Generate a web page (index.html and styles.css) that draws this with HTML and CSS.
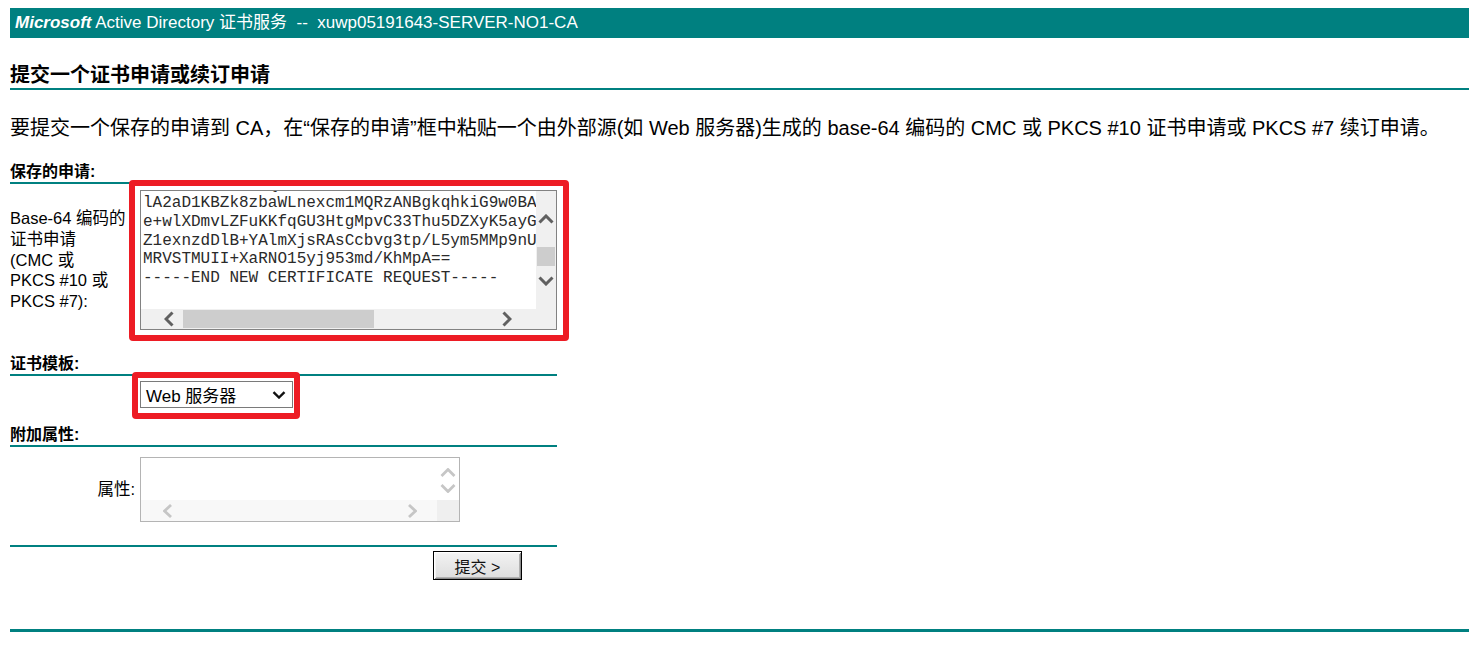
FILE: index.html
```html
<!DOCTYPE html>
<html lang="zh-CN">
<head>
<meta charset="utf-8">
<title>Microsoft Active Directory 证书服务</title>
<link rel="stylesheet" href="styles.css">
</head>
<body>
<div class="header"><span class="ms">Microsoft</span> Active Directory 证书服务&nbsp;&nbsp;--&nbsp;&nbsp;xuwp05191643-SERVER-NO1-CA</div>

<h1 class="title">提交一个证书申请或续订申请</h1>

<p class="intro">要提交一个保存的申请到 CA，在“保存的申请”框中粘贴一个由外部源(如 Web 服务器)生成的 base-64 编码的 CMC 或 PKCS #10 证书申请或 PKCS #7 续订申请。</p>

<div class="form">
  <div class="section">保存的申请:</div>
  <div class="row row-req">
    <div class="label">Base-64 编码的<br>证书申请<br>(CMC 或<br>PKCS #10 或<br>PKCS #7):</div>
    <div class="mark mark-req">
      <div class="ta ta-req">
        <div class="ta-content"><pre class="ta-text">MIICZTCCAU0CAQAwIDEeMBwGA1UEAxMVd3d3LmV4Ag1wbGUuY29tMIIBIjANBgkqh
lA2aD1KBZk8zbaWLnexcm1MQRzANBgkqhkiG9w0BAQsFAAOCAQEAq3Zt8LmWuR2
e+wlXDmvLZFuKKfqGU3HtgMpvC33Thu5DZXyK5ayGw8P0nQ+rT4oVb7sJcE1hLxI
Z1exnzdDlB+YAlmXjsRAsCcbvg3tp/L5ym5MMp9nUe2kWq6FdRa0tHi8oN3jZvbY
MRVSTMUII+XaRNO15yj953md/KhMpA==
-----END NEW CERTIFICATE REQUEST-----</pre></div>
        <div class="vbar">
          <svg class="arr-v up" width="16" height="10" viewBox="0 0 16 10"><polyline points="1.5,8.5 8,2 14.5,8.5"/></svg>
          <div class="vthumb"></div>
          <svg class="arr-v down" width="16" height="10" viewBox="0 0 16 10"><polyline points="1.5,1.5 8,8 14.5,1.5"/></svg>
        </div>
        <div class="hbar">
          <svg class="arr-h left" width="10" height="16" viewBox="0 0 10 16"><polyline points="8.5,1.5 2,8 8.5,14.5"/></svg>
          <div class="hthumb"></div>
          <svg class="arr-h right" width="10" height="16" viewBox="0 0 10 16"><polyline points="1.5,1.5 8,8 1.5,14.5"/></svg>
        </div>
        <div class="corner"></div>
      </div>
    </div>
  </div>

  <div class="section sec-tpl">证书模板:</div>
  <div class="row row-tpl">
    <div class="label"></div>
    <div class="mark mark-sel">
      <div class="select">
        <span>Web 服务器</span>
        <svg width="14" height="8" viewBox="0 0 14 8"><polyline points="1.5,1.2 7,6.5 12.5,1.2"/></svg>
      </div>
    </div>
  </div>

  <div class="section sec-attr">附加属性:</div>
  <div class="row row-attr">
    <div class="label label-right">属性:</div>
    <div class="ta ta-attr">
      <div class="ta-content"></div>
      <div class="vbar">
        <svg class="arr-v up" width="16" height="9" viewBox="0 0 16 9"><polyline points="1.5,8 8,1.5 14.5,8"/></svg>
        <svg class="arr-v down" width="16" height="9" viewBox="0 0 16 9"><polyline points="1.5,1 8,7.5 14.5,1"/></svg>
      </div>
      <div class="hbar">
        <svg class="arr-h left" width="9" height="14" viewBox="0 0 9 14"><polyline points="8,1 1.5,7 8,13"/></svg>
        <svg class="arr-h right" width="9" height="14" viewBox="0 0 9 14"><polyline points="1,1 7.5,7 1,13"/></svg>
      </div>
      <div class="corner"></div>
    </div>
  </div>

  <div class="rule"></div>
  <div class="actions"><button class="submit" type="button">提交 &gt;</button></div>
</div>

<div class="bottom-rule"></div>
</body>
</html>
```

FILE: styles.css
```css
html, body {
  margin: 0;
  padding: 0;
  background: #fff;
}
body {
  padding: 8px 0 0 10px;
  font-family: "Liberation Sans", "Noto Sans CJK SC", sans-serif;
  color: #000;
  overflow: hidden;
}

.header {
  height: 30px;
  line-height: 30px;
  background: #008080;
  color: #fff;
  font-size: 17px;
  padding-left: 5px;
  white-space: nowrap;
}
.header .ms {
  font-weight: bold;
  font-style: italic;
}

.title {
  margin: 24px 0 0;
  height: 26px;
  line-height: 26px;
  font-size: 20px;
  font-weight: bold;
  border-bottom: 2px solid #008080;
}

.intro {
  margin: 25px 0 0;
  font-size: 20px;
  line-height: 26px;
  white-space: nowrap;
}

.form {
  width: 547px;
}

.section {
  margin-top: 21px;
  height: 20px;
  line-height: 20px;
  font-size: 16px;
  font-weight: bold;
  border-bottom: 2px solid #008080;
}
.sec-tpl { margin-top: 24px; }
.sec-attr { margin-top: 17px; }

.row {
  display: grid;
  grid-template-columns: 127px auto;
  column-gap: 3px;
  align-items: center;
}
.row-req { margin-top: 6px; }
.row-tpl { margin-top: 5px; justify-items: start; }
.row-attr { margin-top: 10px; justify-items: start; }

.label {
  font-size: 16.5px;
  line-height: 20.7px;
}
.label-right {
  justify-self: end;
  padding-right: 2px;
}

.mark {
  position: relative;
}
.mark::after {
  content: "";
  position: absolute;
  border: 6px solid #ed1c24;
  border-radius: 4px;
  pointer-events: none;
}
.mark-req::after {
  left: -11px;
  right: -12px;
  top: -10px;
  bottom: -11px;
}
.mark-sel::after {
  left: -8px;
  right: -7px;
  top: -9px;
  bottom: -11px;
}

/* textarea widgets */
.ta {
  display: grid;
  box-sizing: border-box;
  background: #fff;
}
.ta-req {
  width: 417px;
  height: 140px;
  border: 1px solid #828282;
  grid-template-columns: 1fr 20px;
  grid-template-rows: 1fr 20px;
}
.ta-attr {
  width: 320px;
  height: 65px;
  border: 1px solid #b4b4b4;
  grid-template-columns: 1fr 22px;
  grid-template-rows: 1fr 21px;
}
.ta-content {
  overflow: hidden;
  background: #fff;
}
.ta-text {
  margin: -15.5px 0 0 2px;
  font-family: "Liberation Mono", monospace;
  font-size: 16px;
  line-height: 18.7px;
  color: #2a2a2a;
  white-space: pre;
}

.vbar, .hbar, .corner {
  background: #f0f0f0;
}
.vbar {
  display: flex;
  flex-direction: column;
  align-items: center;
}
.hbar {
  display: flex;
  align-items: center;
}
.ta-req .vbar svg polyline,
.ta-req .hbar svg polyline {
  fill: none;
  stroke: #606060;
  stroke-width: 3;
}
.ta-req .arr-v.up { margin-top: 23px; }
.ta-req .vthumb {
  margin-top: 23px;
  width: 18px;
  height: 19px;
  background: #cdcdcd;
}
.ta-req .arr-v.down { margin-top: 10px; }
.ta-req .arr-h.left { margin-left: 23px; }
.ta-req .hthumb {
  margin-left: 9px;
  width: 191px;
  height: 18px;
  background: #cdcdcd;
}
.ta-req .arr-h.right { margin-left: 128px; }

.ta-attr .hbar {
  background: #f8f8f8;
}
.ta-attr .vbar {
  background: #fff;
}
.ta-attr .corner { background: #efefef; }
.ta-attr svg polyline {
  fill: none;
  stroke: #c6c6c6;
  stroke-width: 2.8;
}
.ta-attr .arr-v.up { margin-top: 10px; }
.ta-attr .arr-v.down { margin-top: 7px; }
.ta-attr .arr-h.left { margin-left: 22px; }
.ta-attr .arr-h.right { margin-left: 236px; }

/* select */
.select {
  box-sizing: border-box;
  width: 153px;
  height: 27px;
  border: 1px solid #7a7a7a;
  display: flex;
  align-items: center;
  justify-content: space-between;
  padding: 0 6px 0 5px;
  font-size: 17px;
  background: #fff;
}
.select svg polyline {
  fill: none;
  stroke: #111;
  stroke-width: 2.4;
}

.rule {
  margin-top: 23px;
  border-top: 2px solid #008080;
}
.actions {
  padding-left: 423px;
  padding-top: 4px;
}
.submit {
  display: block;
  box-sizing: border-box;
  width: 89px;
  height: 29px;
  margin: 0;
  padding: 0;
  border: 1px solid #000;
  box-shadow: inset 1px 1px 0 #fff, inset -1px -1px 0 #8a8a8a, inset 2px 2px 0 #f4f4f4, inset -2px -2px 0 #b0b0b0;
  background: linear-gradient(#f3f3f3, #dddddd);
  font-family: "Liberation Sans", "Noto Sans CJK SC", sans-serif;
  font-size: 16px;
  color: #111;
}

.bottom-rule {
  margin-top: 49px;
  border-top: 3px solid #008080;
}
```
